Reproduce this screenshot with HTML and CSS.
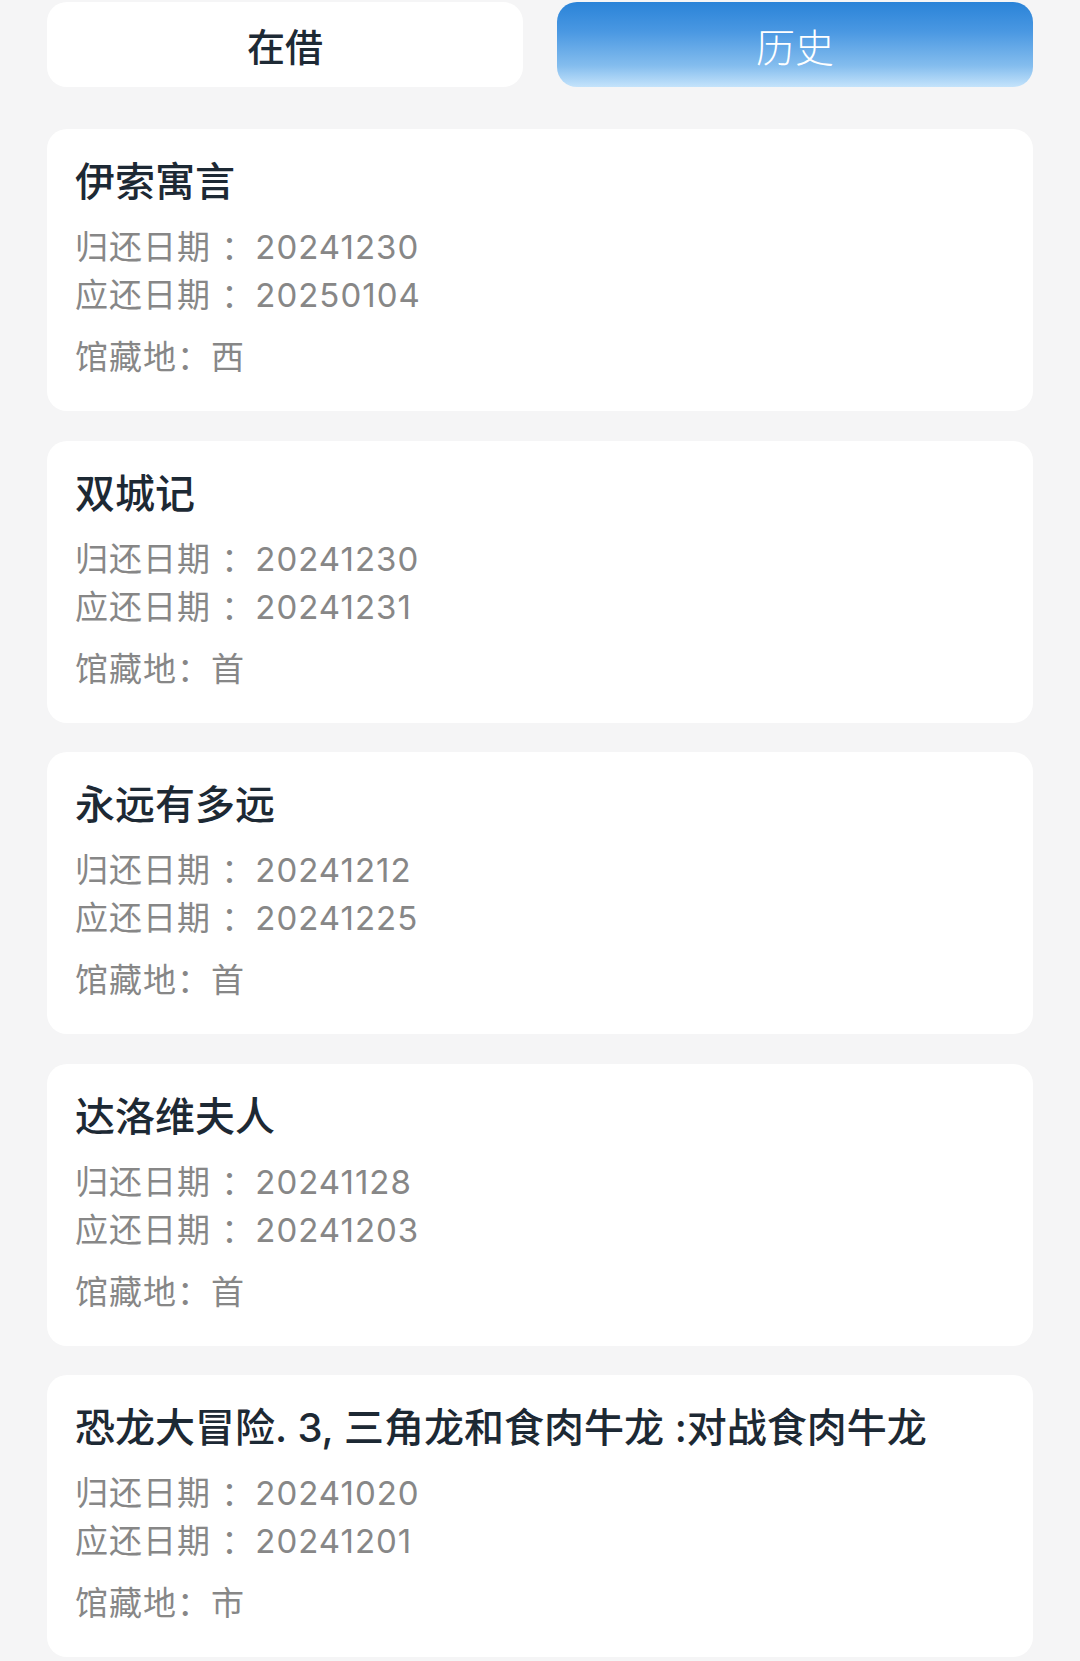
FILE: index.html
```html
<!DOCTYPE html>
<html lang="zh-CN">
<head>
    <meta charset="UTF-8">
    <meta name="viewport" content="width=device-width, initial-scale=1.0">
    <title>借阅记录</title>
    <link rel="stylesheet" href="styles.css">
</head>
<body>
    <nav class="tabs">
        <div class="tab">在借</div>
        <div class="tab active">历史</div>
    </nav>

    <section class="list">
        <div class="card">
            <h2 class="title">伊索寓言</h2>
            <p class="row">归还日期 ：20241230</p>
            <p class="row">应还日期 ：20250104</p>
            <p class="row place">馆藏地：西</p>
        </div>

        <div class="card">
            <h2 class="title">双城记</h2>
            <p class="row">归还日期 ：20241230</p>
            <p class="row">应还日期 ：20241231</p>
            <p class="row place">馆藏地：首</p>
        </div>

        <div class="card">
            <h2 class="title">永远有多远</h2>
            <p class="row">归还日期 ：20241212</p>
            <p class="row">应还日期 ：20241225</p>
            <p class="row place">馆藏地：首</p>
        </div>

        <div class="card">
            <h2 class="title">达洛维夫人</h2>
            <p class="row">归还日期 ：20241128</p>
            <p class="row">应还日期 ：20241203</p>
            <p class="row place">馆藏地：首</p>
        </div>

        <div class="card">
            <h2 class="title">恐龙大冒险. 3, 三角龙和食肉牛龙 :对战食肉牛龙</h2>
            <p class="row">归还日期 ：20241020</p>
            <p class="row">应还日期 ：20241201</p>
            <p class="row place">馆藏地：市</p>
        </div>
    </section>
</body>
</html>
```

FILE: styles.css
```css
body { margin: 0; padding: 2px 47px 0; background-color: #f5f5f6; font-family: Inter, "Noto Sans CJK SC", sans-serif; }
.tabs { display: flex; gap: 34px; margin-bottom: 42px; }
.tab { flex: 1; height: 85px; display: flex; align-items: center; justify-content: center; border-radius: 20px; background-color: #fff; color: #1e2a35; font-size: 38px; font-weight: 500; font-family: "Noto Sans CJK SC", sans-serif; }
.tab.active { background: linear-gradient(180deg, #2a83d8 0%, #4a98e2 35%, #84bdee 75%, #c4e3fb 100%); color: #fff; font-weight: 300; font-size: 39px; }
.list { display: flex; flex-direction: column; gap: 29.5px; }
.card { background-color: #fff; border-radius: 20px; height: 282px; box-sizing: border-box; padding: 28px 28px 0; }
.title { margin: 0 0 16px; font-size: 40px; line-height: 50px; font-weight: 500; color: #1d2934; }
.row { margin: 0; font-size: 33px; line-height: 48px; letter-spacing: 1px; color: #878787; }
.row.place { margin-top: 14px; }
```
